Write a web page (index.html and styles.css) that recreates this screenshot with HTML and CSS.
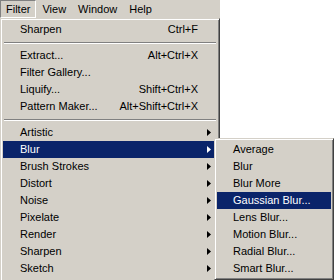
FILE: index.html
```html
<!doctype html>
<html>

<head>
    <meta charset="utf-8" />
    <title>Filter menu</title>
    <link rel="stylesheet" href="styles.css">
</head>

<body>
    <div class="menubar">
        <span class="menubar__item menubar__item--open">Filter</span>
        <span class="menubar__item">View</span>
        <span class="menubar__item">Window</span>
        <span class="menubar__item">Help</span>
    </div>

    <div class="menu menu--main">
        <div class="menu__item"><span class="menu__label">Sharpen</span><span class="menu__key">Ctrl+F</span></div>
        <div class="menu__sep"></div>
        <div class="menu__item"><span class="menu__label">Extract...</span><span class="menu__key">Alt+Ctrl+X</span></div>
        <div class="menu__item"><span class="menu__label">Filter Gallery...</span></div>
        <div class="menu__item"><span class="menu__label">Liquify...</span><span class="menu__key">Shift+Ctrl+X</span></div>
        <div class="menu__item"><span class="menu__label">Pattern Maker...</span><span class="menu__key">Alt+Shift+Ctrl+X</span></div>
        <div class="menu__sep"></div>
        <div class="menu__item"><span class="menu__label">Artistic</span><span class="menu__arrow"></span></div>
        <div class="menu__item menu__item--active"><span class="menu__label">Blur</span><span class="menu__arrow"></span></div>
        <div class="menu__item"><span class="menu__label">Brush Strokes</span><span class="menu__arrow"></span></div>
        <div class="menu__item"><span class="menu__label">Distort</span><span class="menu__arrow"></span></div>
        <div class="menu__item"><span class="menu__label">Noise</span><span class="menu__arrow"></span></div>
        <div class="menu__item"><span class="menu__label">Pixelate</span><span class="menu__arrow"></span></div>
        <div class="menu__item"><span class="menu__label">Render</span><span class="menu__arrow"></span></div>
        <div class="menu__item"><span class="menu__label">Sharpen</span><span class="menu__arrow"></span></div>
        <div class="menu__item"><span class="menu__label">Sketch</span><span class="menu__arrow"></span></div>
    </div>

    <div class="menu menu--sub">
        <div class="menu__item"><span class="menu__label">Average</span></div>
        <div class="menu__item"><span class="menu__label">Blur</span></div>
        <div class="menu__item"><span class="menu__label">Blur More</span></div>
        <div class="menu__item menu__item--active"><span class="menu__label">Gaussian Blur...</span></div>
        <div class="menu__item"><span class="menu__label">Lens Blur...</span></div>
        <div class="menu__item"><span class="menu__label">Motion Blur...</span></div>
        <div class="menu__item"><span class="menu__label">Radial Blur...</span></div>
        <div class="menu__item"><span class="menu__label">Smart Blur...</span></div>
    </div>
</body>

</html>
```

FILE: styles.css
```css
* {
    font-family: 'Liberation Sans', Arial, sans-serif;
    box-sizing: border-box;
}

html,
body {
    margin: 0;
    padding: 0;
    width: 100%;
    height: 100%;
    overflow: hidden;
    background: white;
    font-size: 11px;
    color: black;
}

.menubar {
    display: flex;
    width: 220px;
    height: 18px;
    background: #d4d0c8;
}

.menubar__item {
    height: 18px;
    line-height: 16px;
    padding: 0 5px;
    border: 1px solid transparent;
    user-select: none;
}

.menubar__item--open {
    border-color: #808080 #ffffff #ffffff #808080;
}

.menu {
    background: #d4d0c8;
    border: 1px solid;
    border-color: #d4d0c8 #404040 #404040 #d4d0c8;
    box-shadow: inset 1px 1px 0 #ffffff, inset -1px -1px 0 #808080;
    padding: 2px;
}

/* runs on past the bottom of the window */
.menu--main {
    width: 220px;
    height: 290px;
}

/* submenu lies over the main menu */
.menu--sub {
    position: absolute;
    left: 214px;
    top: 138px;
    width: 120px;
}

.menu__item {
    display: flex;
    align-items: center;
    height: 17px;
    line-height: 17px;
    padding: 0 6px 0 17px;
    white-space: nowrap;
}

.menu--sub .menu__item {
    padding-left: 16px;
}

.menu__item--active {
    background: #0a246a;
    color: white;
}

.menu__label {
    flex: 1;
}

.menu__key {
    margin-right: 13px;
}

.menu__arrow {
    width: 4px;
    height: 7px;
    background: currentColor;
    clip-path: polygon(0 0, 100% 50%, 0 100%);
}

.menu__sep {
    height: 9px;
    padding-top: 4px;
    margin: 0 1px;
}

.menu__sep::before {
    content: '';
    display: block;
    height: 1px;
    background: #808080;
    border-bottom: 1px solid #ffffff;
    box-sizing: content-box;
}
```
